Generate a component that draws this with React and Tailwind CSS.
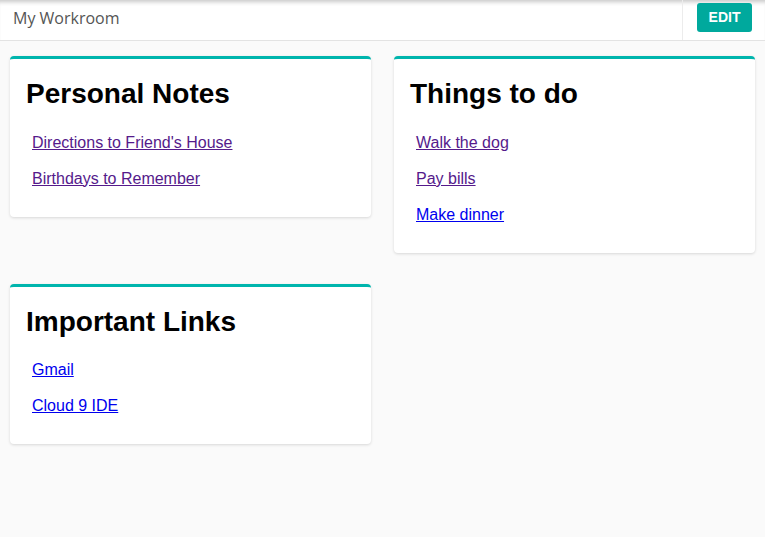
const CARDS = [
  {
    title: 'Personal Notes',
    links: [
      { label: "Directions to Friend's House", visited: true },
      { label: 'Birthdays to Remember', visited: true },
    ],
  },
  {
    title: 'Things to do',
    links: [
      { label: 'Walk the dog', visited: true },
      { label: 'Pay bills', visited: true },
      { label: 'Make dinner', visited: false },
    ],
  },
  {
    title: 'Important Links',
    links: [
      { label: 'Gmail', visited: false },
      { label: 'Cloud 9 IDE', visited: false },
    ],
  },
];

function Card({ title, links }) {
  return (
    <div className="bg-white rounded border-t-[3px] border-[#00b5ad] shadow-[0_1px_3px_rgba(0,0,0,0.14)] px-4 pt-[18px] pb-5">
      <h2 className="text-[28px] leading-[1.2] font-bold text-black">{title}</h2>
      <ul className="mt-[14px]">
        {links.map((l) => (
          <li key={l.label} className="px-[6px] leading-9 text-base">
            <a
              href="#"
              className={`underline ${l.visited ? 'text-[#551a8b]' : 'text-[#0000ee]'}`}
            >
              {l.label}
            </a>
          </li>
        ))}
      </ul>
    </div>
  );
}

export default function App() {
  return (
    <div className="min-h-[537px] bg-[#fafafa] font-['Liberation_Sans',Arial,sans-serif]">
      {/* top bar */}
      <header className="h-[41px] flex items-stretch bg-white border-b border-[#e3e3e3] shadow-[inset_0_5px_4px_-3px_rgba(0,0,0,0.22)]">
        <div className="flex-1 flex items-center pl-[13px] pb-[4px] text-base text-[#555] font-['Open_Sans',sans-serif]">
          My Workroom
        </div>
        <div className="w-[83px] border-l border-[#ececec] pl-[14px] pt-[3px]">
          <button className="w-[55px] h-[29px] rounded-[3px] bg-[#00a99d] text-white text-[14px] font-bold">
            EDIT
          </button>
        </div>
      </header>

      {/* cards */}
      <main className="grid grid-cols-2 items-start gap-x-[23px] gap-y-[31px] px-[10px] pt-[15px]">
        {CARDS.map((c) => (
          <Card key={c.title} {...c} />
        ))}
      </main>
    </div>
  );
}
